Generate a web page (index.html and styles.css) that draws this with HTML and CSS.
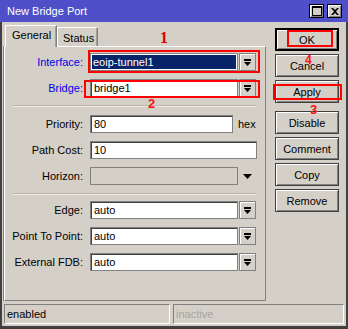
FILE: index.html
```html
<!DOCTYPE html>
<html>
<head>
<meta charset="utf-8">
<link rel="stylesheet" href="styles.css">
</head>
<body>
<div class="window">
  <div class="titlebar">
    <span class="title">New Bridge Port</span>
    <div class="tbtns">
      <span class="tbtn"><svg width="10" height="10" viewBox="0 0 10 10"><rect x="0.5" y="0.5" width="9" height="9" fill="none" stroke="#000"/><rect x="0" y="0" width="10" height="2" fill="#000"/></svg></span>
      <span class="tbtn"><svg width="8" height="7" viewBox="0 0 8 7"><path d="M0 0h2l2 2 2-2h2L5 3.5 8 7H6L4 5 2 7H0l3-3.5z" fill="#000"/></svg></span>
    </div>
  </div>
  <div class="main">
    <div class="left">
      <div class="tabs">
        <div class="tab active">General</div>
        <div class="tab">Status</div>
      </div>
      <div class="panel">
        <div class="row">
          <span class="label blue">Interface:</span>
          <span class="input selected">eoip-tunnel1</span>
          <span class="drop"><svg width="7" height="7" viewBox="0 0 7 7"><rect x="0" y="0" width="7" height="2" fill="#000"/><path d="M0 3h7L3.5 7z" fill="#000"/></svg></span>
        </div>
        <div class="row">
          <span class="label blue">Bridge:</span>
          <span class="input">bridge1</span>
          <span class="drop"><svg width="7" height="7" viewBox="0 0 7 7"><rect x="0" y="0" width="7" height="2" fill="#000"/><path d="M0 3h7L3.5 7z" fill="#000"/></svg></span>
        </div>
        <div class="sep sep1"></div>
        <div class="row">
          <span class="label">Priority:</span>
          <span class="input short">80</span>
          <span class="unit">hex</span>
        </div>
        <div class="row">
          <span class="label">Path Cost:</span>
          <span class="input wide">10</span>
        </div>
        <div class="row">
          <span class="label">Horizon:</span>
          <span class="input disabled"></span>
          <span class="tri"><svg width="9" height="5" viewBox="0 0 9 5"><path d="M0 0h9L4.5 5z" fill="#000"/></svg></span>
        </div>
        <div class="sep sep2"></div>
        <div class="row">
          <span class="label">Edge:</span>
          <span class="input">auto</span>
          <span class="drop"><svg width="7" height="7" viewBox="0 0 7 7"><rect x="0" y="0" width="7" height="2" fill="#000"/><path d="M0 3h7L3.5 7z" fill="#000"/></svg></span>
        </div>
        <div class="row">
          <span class="label">Point To Point:</span>
          <span class="input">auto</span>
          <span class="drop"><svg width="7" height="7" viewBox="0 0 7 7"><rect x="0" y="0" width="7" height="2" fill="#000"/><path d="M0 3h7L3.5 7z" fill="#000"/></svg></span>
        </div>
        <div class="row">
          <span class="label">External FDB:</span>
          <span class="input">auto</span>
          <span class="drop"><svg width="7" height="7" viewBox="0 0 7 7"><rect x="0" y="0" width="7" height="2" fill="#000"/><path d="M0 3h7L3.5 7z" fill="#000"/></svg></span>
        </div>
      </div>
    </div>
    <div class="buttons">
      <div class="btn default">OK</div>
      <div class="btn">Cancel</div>
      <div class="btn">Apply</div>
      <div class="btn gap">Disable</div>
      <div class="btn">Comment</div>
      <div class="btn">Copy</div>
      <div class="btn">Remove</div>
    </div>
  </div>
  <div class="statusbar">
    <div class="sfield first">enabled</div>
    <div class="sfield second inactive">inactive</div>
  </div>

  <div class="mark box-iface"></div>
  <div class="mark box-bridge"></div>
  <div class="mark box-ok"></div>
  <div class="mark box-apply"></div>
  <span class="num n1">1</span>
  <span class="num n2">2</span>
  <span class="num n3">3</span>
  <span class="num n4">4</span>
</div>
</body>
</html>
```

FILE: styles.css
```css
* { box-sizing: border-box; }
html, body { margin: 0; padding: 0; background: #d4d0c8; }
body { font-family: "Liberation Sans", Arial, sans-serif; font-size: 11px; color: #000; }

.window {
  position: relative;
  width: 348px;
  height: 329px;
  background: #d4d0c8;
  border-left: 2px solid #404040;
  border-right: 2px solid #404040;
  border-bottom: 3px solid #404040;
  display: flex;
  flex-direction: column;
}

.titlebar {
  height: 22px;
  margin: 0 -2px;
  background: #4f50c9;
  color: #fff;
  display: flex;
  align-items: center;
  justify-content: space-between;
  padding: 0 6px 0 7px;
  font-size: 11px;
}
.tbtns { display: flex; gap: 3px; }
.tbtn {
  width: 15px;
  height: 14px;
  background: #d4d0c8;
  border: 1px solid #000;
  box-shadow: inset 1px 1px #fff, inset -1px -1px #808080;
  display: flex;
  align-items: center;
  justify-content: center;
}

.main {
  display: flex;
  padding: 3px 0 0 2px;
}
.left { width: 262px; display: flex; flex-direction: column; }

.tabs { display: flex; align-items: flex-end; height: 21px; padding-left: 1px; }
.tab {
  height: 19px;
  padding: 0 5px;
  border: 1px solid #fff;
  border-right-color: #808080;
  border-bottom: none;
  background: #d4d0c8;
  display: flex;
  align-items: center;
  box-shadow: inset -1px 0 #a0a0a0;
}
.tab.active {
  height: 22px;
  margin-bottom: -1px;
  position: relative;
  z-index: 1;
  width: 52px;
  padding: 0 0 3px 6px;
}
.tab:not(.active) { width: 41px; padding-left: 5px; padding-top: 2px; }

.panel {
  height: 255px;
  border: 1px solid #808080;
  border-top-color: #fff;
  border-left-color: #fff;
  box-shadow: -1px 0 #808080;
  padding-top: 6px;
}

.row {
  display: flex;
  align-items: center;
  height: 18px;
  margin-bottom: 8px;
}
.label {
  width: 78px;
  text-align: right;
  margin-right: 7px;
  white-space: nowrap;
}
.label.blue { color: #0000e8; }
.input {
  width: 148px;
  height: 18px;
  background: #fff;
  border: 1px solid #808080;
  box-shadow: inset 1px 1px #404040;
  padding: 0 3px;
  display: flex;
  align-items: center;
  line-height: 1;
}
.input.selected { background: #0a246a; color: #fff; box-shadow: inset 0 0 0 1px #fff; padding-left: 2px; }
.input.short { width: 143px; }
.input.wide { width: 167px; }
.input.disabled { background: #d4d0c8; box-shadow: none; }
.unit { margin-left: 5px; }
.tri { margin-left: 5px; display: flex; }
.drop {
  width: 17px;
  height: 18px;
  margin-left: 1px;
  border: 1px solid #808080;
  box-shadow: inset 1px 1px #fff;
  display: flex;
  align-items: center;
  justify-content: center;
}

.sep {
  height: 2px;
  border-top: 1px solid #b8b4ac;
  border-bottom: 1px solid #ecebe8;
  margin-left: 8px;
  width: 244px;
}
.sep1 { margin-top: 2px; margin-bottom: 8px; }
.sep2 { margin-top: 0; margin-bottom: 6px; }

.buttons {
  margin-left: 9px;
  padding-top: 3px;
  display: flex;
  flex-direction: column;
  gap: 3px;
}
.btn {
  width: 64px;
  height: 23px;
  border: 1px solid #404040;
  box-shadow: inset 1px 1px #fff, inset -1px -1px #808080;
  display: flex;
  align-items: center;
  justify-content: center;
}
.btn.default { border-color: #000; box-shadow: inset 0 0 0 1px #000, inset 2px 2px #fff, inset -2px -2px #808080; }
.btn.gap { margin-top: 5px; }

.statusbar {
  display: flex;
  gap: 3px;
  margin-top: 3px;
  padding-left: 2px;
}
.sfield {
  height: 20px;
  border: 1px solid #fff;
  border-top-color: #808080;
  border-left-color: #808080;
  display: flex;
  align-items: center;
  padding-left: 2px;
}
.sfield.first { width: 166px; }
.sfield.second { width: 171px; }
.inactive { color: #a8a4a0; }

.mark { position: absolute; border: 2px solid #ff0000; }
.box-iface { left: 86px; top: 50px; width: 172px; height: 23px; }
.box-bridge { left: 82px; top: 80px; width: 176px; height: 18px; }
.box-ok { left: 285px; top: 30px; width: 46px; height: 17px; }
.box-apply { left: 271px; top: 84px; width: 69px; height: 16px; }

.num { position: absolute; color: #ff1010; font-weight: bold; line-height: 1; }
.n1 { left: 158px; top: 30px; font-family: "Liberation Serif", serif; font-size: 16px; color: #e00000; }
.n2 { left: 146px; top: 97px; font-size: 13px; font-family: "Liberation Sans", sans-serif; }
.n3 { left: 308px; top: 103px; font-size: 13px; }
.n4 { left: 303px; top: 54px; font-size: 12px; }
```
